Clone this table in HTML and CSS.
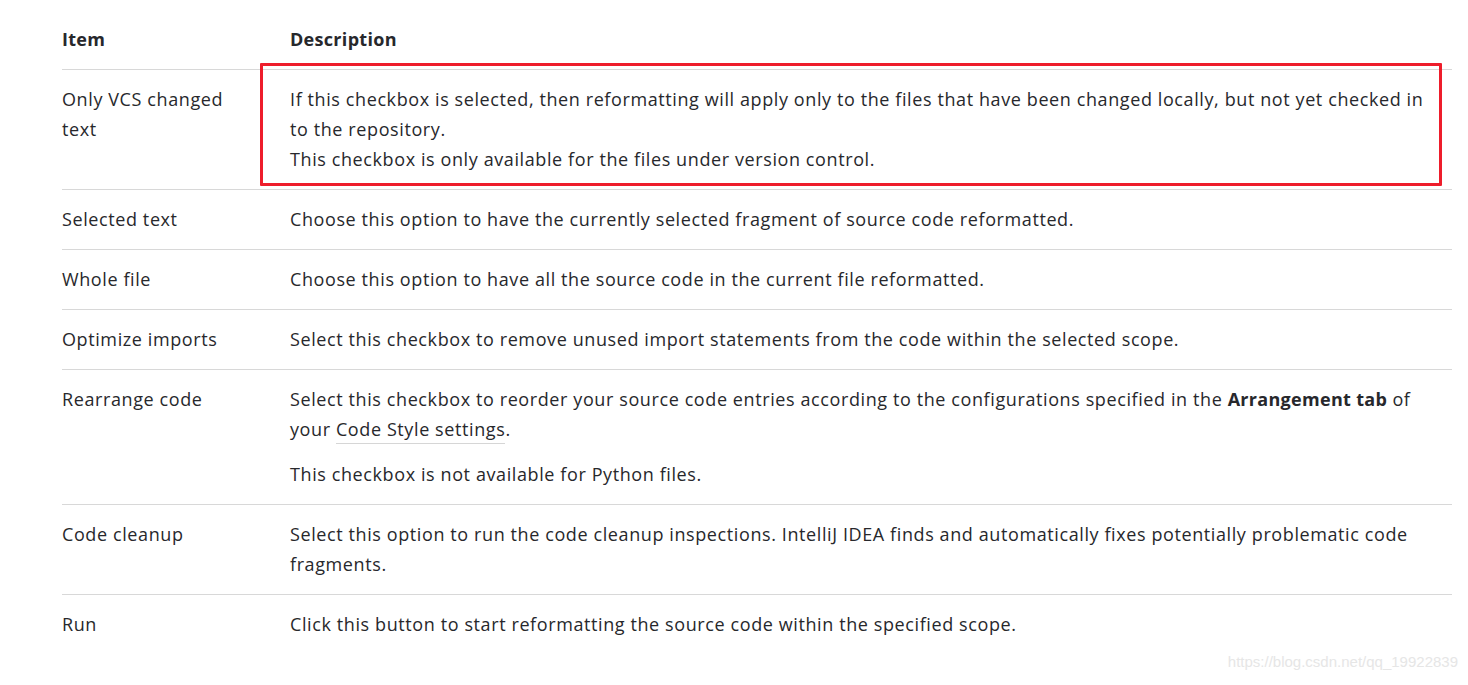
FILE: index.html
```html
<!DOCTYPE html>
<html>
<head>
<meta charset="utf-8">
<link rel="stylesheet" href="styles.css">
</head>
<body>
<div class="wrap">
<table class="tbl">
<colgroup><col class="col1"><col class="col2"></colgroup>
<thead>
<tr><th class="c1">Item</th><th class="c2">Description</th></tr>
</thead>
<tbody>
<tr><td class="c1">Only VCS changed text</td><td class="c2"><p>If this checkbox is selected, then reformatting will apply only to the files that have been changed locally, but not yet checked in to the repository.</p><p>This checkbox is only available for the files under version control.</p></td></tr>
<tr><td class="c1">Selected text</td><td class="c2"><p>Choose this option to have the currently selected fragment of source code reformatted.</p></td></tr>
<tr><td class="c1">Whole file</td><td class="c2"><p>Choose this option to have all the source code in the current file reformatted.</p></td></tr>
<tr><td class="c1">Optimize imports</td><td class="c2"><p>Select this checkbox to remove unused import statements from the code within the selected scope.</p></td></tr>
<tr><td class="c1">Rearrange code</td><td class="c2"><p>Select this checkbox to reorder your source code entries according to the configurations specified in the <b>Arrangement tab</b> of your <span class="link">Code Style settings</span>.</p><p class="gap">This checkbox is not available for Python files.</p></td></tr>
<tr><td class="c1">Code cleanup</td><td class="c2"><p>Select this option to run the code cleanup inspections. IntelliJ IDEA finds and automatically fixes potentially problematic code fragments.</p></td></tr>
<tr><td class="c1">Run</td><td class="c2"><p>Click this button to start reformatting the source code within the specified scope.</p></td></tr>
</tbody>
</table>
<div class="mark"></div>
</div>
<div class="wm">https://blog.csdn.net/qq_19922839</div>
</body>
</html>
```
FILE: styles.css
```css
html, body {
  margin: 0;
  padding: 0;
  background: #fff;
}
body {
  font-family: "Open Sans", "Noto Sans CJK SC", sans-serif;
  font-size: 18px;
  letter-spacing: 0.6px;
  line-height: 30px;
  color: #27282c;
  width: 1468px;
  height: 685px;
  overflow: hidden;
  position: relative;
}
.wrap {
  position: relative;
  padding: 10px 0 0 62px;
}
.tbl {
  width: 1390px;
  border-collapse: collapse;
  table-layout: fixed;
}
.col1 {
  width: 228px;
}
.tbl th {
  text-align: left;
  font-weight: 700;
  letter-spacing: 0.3px;
  padding: 14px 0 15px 0;
  vertical-align: top;
}
.tbl td {
  vertical-align: top;
  padding: 14px 0 15px 0;
  border-top: 1px solid #d8d8d8;
}
.tbl .c1 {
  padding-right: 30px;
}
.tbl .c2 {
  padding-right: 10px;
}
.tbl p {
  margin: 0;
}
.tbl p.gap {
  margin-top: 15px;
}
.tbl b {
  letter-spacing: 0.3px;
}
.link {
  border-bottom: 1px solid #d6d6d6;
  padding-bottom: 2px;
}
.mark {
  position: absolute;
  left: 260px;
  top: 63px;
  width: 1176px;
  height: 117px;
  border: 3px solid #ee1d2b;
  border-radius: 1px;
}
.wm {
  position: absolute;
  right: 10px;
  bottom: 13px;
  font-family: "Liberation Sans", sans-serif;
  font-size: 15px;
  color: #e6e6e6;
  line-height: 20px;
  letter-spacing: 0;
}
```
